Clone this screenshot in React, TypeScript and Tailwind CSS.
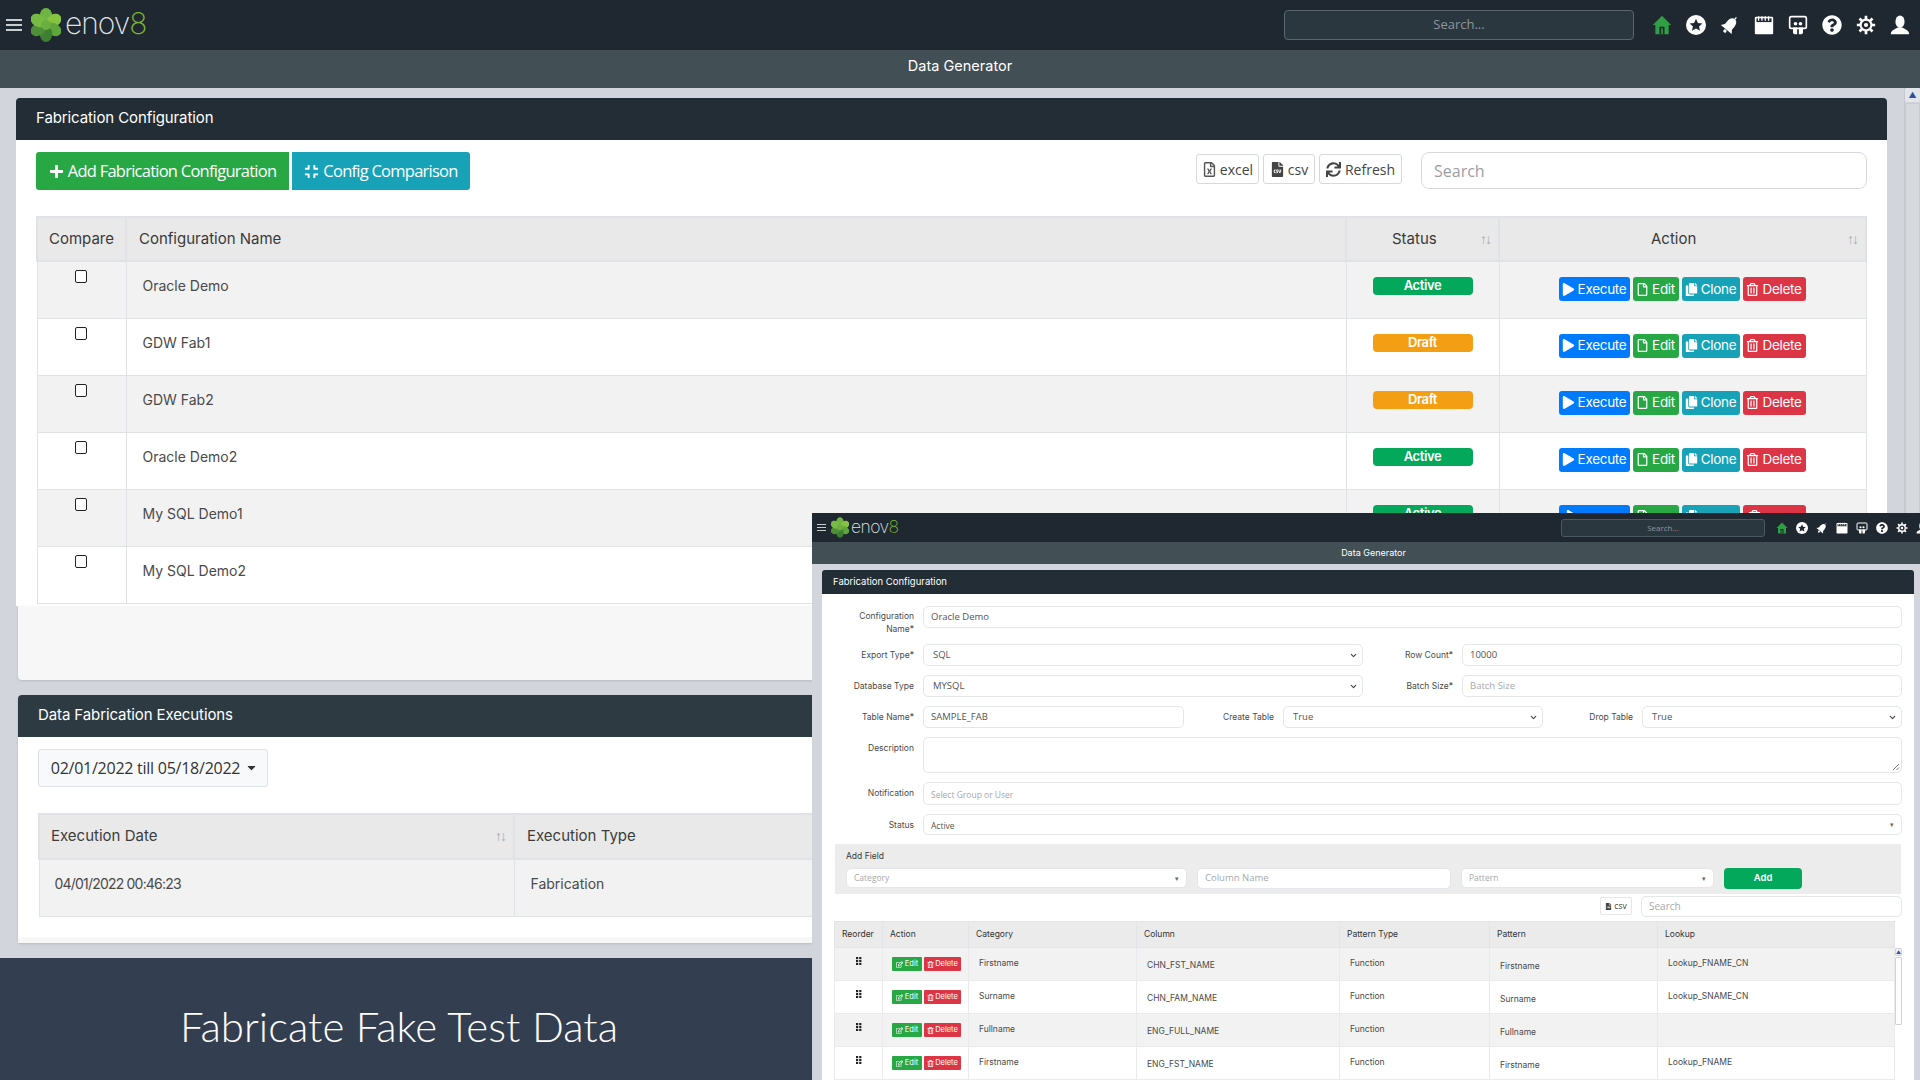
import React from "react";
import { FaPlus, FaCompress, FaRegFileExcel, FaFileCsv, FaSync, FaPlay, FaRegFile, FaCopy, FaRegTrashAlt, FaRegEdit, FaQuestionCircle, FaCaretDown } from "react-icons/fa";
import { ChevronDown } from "lucide-react";

function Clover({ w, h }: { w: number; h: number }) {
  const lobes = [
    { a: 0, c: "#6fb544" },
    { a: 60, c: "#86c440" },
    { a: 120, c: "#5fa63c" },
    { a: 180, c: "#3f7f31" },
    { a: 240, c: "#4f8f38" },
    { a: 300, c: "#78bb44" },
  ];
  return (
    <svg width={w} height={h} viewBox="0 0 30 34" className="shrink-0">
      {lobes.map((l) => (
        <ellipse key={l.a} cx="15" cy="8" rx="6.2" ry="8" fill={l.c} transform={`rotate(${l.a} 15 17)`} />
      ))}
      <circle cx="15" cy="17" r="5" fill="#6aaf3f" />
    </svg>
  );
}

function NavIcons({ s, gap }: { s: number; gap: string }) {
  const bg = "#1f2730";
  return (
    <div className={`flex items-center ${gap}`}>
      <svg width={s} height={s} viewBox="0 0 24 24" className="shrink-0">
        <path d="M12 1 L1 12 H4 V23 H20 V12 H23 Z" fill="#2f9e44" />
        <path d="M9 23 V14 H15 V23 H13 V16 H11 V23 Z" fill={bg} />
      </svg>
      <svg width={s} height={s} viewBox="0 0 24 24" className="shrink-0">
        <circle cx="12" cy="12" r="12" fill="#fff" />
        <path d="M12 4.5 L14.3 9.5 L19.6 10.1 L15.7 13.7 L16.8 19 L12 16.3 L7.2 19 L8.3 13.7 L4.4 10.1 L9.7 9.5 Z" fill={bg} />
      </svg>
      <svg width={s} height={s} viewBox="0 0 24 24" className="shrink-0">
        <g transform="rotate(40 12 12)">
          <path d="M12 3 C7.5 3 6.5 8 6.5 11 V15 L3.5 19 H20.5 L17.500 15 V11 C17.500 8 16.500 3 12 3 Z" fill="#fff" />
          <circle cx="12" cy="21.500" r="2" fill="#fff" />
          <path d="M12 3 V0" stroke="#fff" strokeWidth="1.500" />
        </g>
      </svg>
      <svg width={s} height={s} viewBox="0 0 24 24" className="shrink-0">
        <rect x="1" y="2" width="22" height="21" rx="1.500" fill="#fff" />
        <rect x="3" y="4" width="18" height="4.500" fill={bg} />
        <path d="M5.500 1.500 V7 M9.500 1.500 V7 M13.500 1.500 V7 M17.500 1.500 V7" stroke="#fff" strokeWidth="1.600" />
      </svg>
      <svg width={s} height={s} viewBox="0 0 24 24" className="shrink-0">
        <rect x="2" y="2" width="20" height="14" rx="2" fill={bg} stroke="#fff" strokeWidth="2" />
        <circle cx="9" cy="10.500" r="2.200" fill="#fff" />
        <circle cx="15" cy="10.500" r="2.200" fill="#fff" />
        <path d="M6 15 H11 V23 H8 C7 23 6 22 6 21 Z M13 15 H18 V21 C18 22 17 23 16 23 H13 Z" fill="#fff" />
      </svg>
      <FaQuestionCircle size={s} color="#fff" className="shrink-0" />
      <svg width={s} height={s} viewBox="0 0 24 24" className="shrink-0">
        <path d="M12 1 V23 M1 12 H23 M4.200 4.200 L19.800 19.800 M19.800 4.200 L4.200 19.800" stroke="#fff" strokeWidth="3.200" />
        <circle cx="12" cy="12" r="6.500" fill={bg} stroke="#fff" strokeWidth="2.600" />
        <circle cx="12" cy="12" r="2.500" fill="#fff" />
      </svg>
      <svg width={s} height={s} viewBox="0 0 24 24" className="shrink-0">
        <ellipse cx="12" cy="8" rx="5.500" ry="7.500" fill="#fff" />
        <path d="M1 23 C1 18 6 17.500 9 15 H15 C18 17.500 23 18 23 23 Z" fill="#fff" />
      </svg>
    </div>
  );
}

function Sort() {
  return <span className="text-[14px] leading-none tracking-[-2px] text-[#a8adb2] font-['Liberation_Sans',sans-serif]">↑↓</span>;
}

const rows = [
  { n: "Oracle Demo", s: "Active", mode: "full" },
  { n: "GDW Fab1", s: "Draft", mode: "full" },
  { n: "GDW Fab2", s: "Draft", mode: "full" },
  { n: "Oracle Demo2", s: "Active", mode: "full" },
  { n: "My SQL Demo1", s: "Active", mode: "clipped" },
  { n: "My SQL Demo2", s: "Draft", mode: "hidden" },
];

function RowActions({ clipped }: { clipped?: boolean }) {
  const btn = "h-[24px] flex items-center justify-center gap-[3px] rounded-[3px] text-white text-[13.500px] tracking-[-0.3px]";
  return (
    <div className="flex gap-[3px] pl-[59px] pt-[15px]">
      <span className={`${btn} w-[71px] bg-[#007bff]`}>{clipped ? <span className="w-[13px] mr-[44px] flex"><FaPlay size={13} /></span> : <><FaPlay size={13} />Execute</>}</span>
      <span className={`${btn} w-[46px] bg-[#28a745]`}>{clipped ? <span className="mr-[26px] flex"><FaRegFile size={13} /></span> : <><FaRegFile size={13} />Edit</>}</span>
      <span className={`${btn} w-[58px] bg-[#17a2b8]`}>{clipped ? <span className="mr-[38px] flex"><FaCopy size={13} /></span> : <><FaCopy size={13} />Clone</>}</span>
      <span className={`${btn} w-[63px] bg-[#dc3545]`}>{clipped ? <span className="mr-[40px] flex"><FaRegTrashAlt size={13} /></span> : <><FaRegTrashAlt size={13} />Delete</>}</span>
    </div>
  );
}

function Box({ text, muted, select, cls, mini, low }: { text: string; muted?: boolean; select?: boolean; cls: string; mini?: boolean; low?: boolean }) {
  return (
    <div className={`flex items-center justify-between border border-[#e3e6ea] rounded-[5px] bg-white px-[7px] text-[9.500px] font-['Open_Sans',sans-serif] ${muted ? "text-[#a6a9ad]" : "text-[#555]"} ${cls}`}>
      <span className={`${select ? "pl-[2px]" : ""} ${low ? "pt-[3px]" : ""}`}>{text}</span>
      {select && <ChevronDown size={9} strokeWidth={3} className="text-[#444] -mr-[3px]" />}
      {mini && <span className="text-[7px] text-[#666] leading-none">▾</span>}
    </div>
  );
}

const labelCls = "text-right text-[8.500px] leading-[12.500px] text-[#4a4a4a] pt-[5px]";

const miniRows = [
  ["Firstname", "CHN_FST_NAME", "Function", "Firstname", "Lookup_FNAME_CN"],
  ["Surname", "CHN_FAM_NAME", "Function", "Surname", "Lookup_SNAME_CN"],
  ["Fullname", "ENG_FULL_NAME", "Function", "Fullname", ""],
  ["Firstname", "ENG_FST_NAME", "Function", "Firstname", "Lookup_FNAME"],
];

export default function App() {
  return (
    <div className="relative w-[1920px] h-[1080px] overflow-hidden bg-[#d2d6dc] font-['Inter',sans-serif]">
      {/* Top bar */}
      <header className="h-[50px] bg-[#1f2730] flex items-center">
        <div className="w-[16px] ml-[6px] flex flex-col gap-[3px]">
          <span className="h-[2px] bg-[#c9cdd0]" />
          <span className="h-[2px] bg-[#c9cdd0]" />
          <span className="h-[2px] bg-[#c9cdd0]" />
        </div>
        <div className="ml-[9px]"><Clover w={30} h={34} /></div>
        <div className="ml-[4px] text-[30px] leading-none font-['Inter',sans-serif] font-[200] tracking-[-1px] text-[#dfe3e5] -mt-[5px]">
          enov<span className="text-[#7db52f]">8</span>
        </div>
        <div className="ml-auto w-[350px] h-[30px] rounded-[4px] border border-[#5a6670] bg-[#2b373f] flex items-center justify-center text-[13px] text-[#8c969d] font-['Open_Sans',sans-serif]">
          Search...
        </div>
        <div className="ml-[18px] pr-[10px]"><NavIcons s={20} gap="gap-[14px]" /></div>
      </header>
      <div className="h-[38px] bg-[#424f55] flex items-center justify-center pb-[6px] text-[14.500px] text-white">Data Generator</div>

      {/* Body */}
      <div className="flex h-[870px]">
        <div className="flex-1 min-w-0 pt-[10px] pl-[16px] pr-[17px]">
          <section>
            <div className="h-[42px] bg-[#222d35] rounded-t-[4px] flex items-center pb-[1px] px-[20px] text-[15px] text-white tracking-[-0.1px]">
              Fabrication Configuration
            </div>
            <div className="bg-white px-[20px] pt-[12px] pb-[2px]">
              <div className="flex items-start">
                <button className="w-[253px] h-[38px] rounded-l-[3px] bg-[#28a745] text-white text-[16.500px] flex items-center justify-center gap-[4px] font-['Open_Sans',sans-serif] tracking-[-0.75px]">
                  <FaPlus size={15} />Add Fabrication Configuration
                </button>
                <button className="ml-[3px] w-[178px] h-[38px] rounded-r-[3px] bg-[#17a2b8] text-white text-[16.500px] flex items-center justify-center gap-[4px] font-['Open_Sans',sans-serif] tracking-[-0.75px]">
                  <FaCompress size={15} />Config Comparison
                </button>
                <div className="flex-1" />
                <button className="mt-[2px] w-[63px] h-[30px] border border-[#d5d9de] rounded-[3px] text-[14px] text-[#444] flex items-center justify-center gap-[3px] font-['Open_Sans',sans-serif]">
                  <FaRegFileExcel size={15} className="text-[#555]" />excel
                </button>
                <button className="mt-[2px] ml-[4px] w-[52px] h-[30px] border border-[#d5d9de] rounded-[3px] text-[14px] text-[#444] flex items-center justify-center gap-[3px] font-['Open_Sans',sans-serif]">
                  <FaFileCsv size={15} className="text-[#444]" />csv
                </button>
                <button className="mt-[2px] ml-[4px] w-[83px] h-[30px] border border-[#d5d9de] rounded-[3px] text-[14px] text-[#444] flex items-center justify-center gap-[4px] font-['Open_Sans',sans-serif]">
                  <FaSync size={15} className="text-[#444]" />Refresh
                </button>
                <input readOnly placeholder="Search" className="ml-[19px] w-[446px] h-[37px] border border-[#d5d9de] rounded-[8px] px-[12px] text-[16px] placeholder:text-[#9a9ea3] font-['Open_Sans',sans-serif]" />
              </div>
              <table className="mt-[26px] w-[1829px] table-fixed border-collapse text-[#3d3d3d]">
                <colgroup>
                  <col className="w-[89px]" />
                  <col className="w-[1220px]" />
                  <col className="w-[153px]" />
                  <col className="w-[367px]" />
                </colgroup>
                <thead>
                  <tr className="h-[44px] bg-[#e9e9e9] text-[15px] text-[#3a3a3a] font-normal">
                    <th className="border-2 border-[#e0e3e6] font-normal text-center">Compare</th>
                    <th className="border-2 border-[#e0e3e6] font-normal text-left pl-[12px]">Configuration Name</th>
                    <th className="border-2 border-[#e0e3e6] font-normal text-left pl-[45px]">
                      <div className="flex items-center justify-between pr-[8px]">Status<Sort /></div>
                    </th>
                    <th className="border-2 border-[#e0e3e6] font-normal text-left pl-[151px]">
                      <div className="flex items-center justify-between pr-[8px]">Action<Sort /></div>
                    </th>
                  </tr>
                </thead>
                <tbody>
                  {rows.map((r, i) => (
                    <tr key={r.n} className={`h-[57px] ${i % 2 === 0 ? "bg-[#f2f2f2]" : "bg-white"}`}>
                      <td className="border border-[#dfe3e6] align-top text-center pt-[3px] pr-[2px]">
                        <span className="inline-block w-[12px] h-[13px] border border-[#222] rounded-[2px] bg-white" />
                      </td>
                      <td className="border border-[#dfe3e6] align-top pl-[16px] pt-[15px] text-[14px] leading-[18px] text-[#4a4a4a]">{r.n}</td>
                      <td className="border border-[#dfe3e6] align-top pl-[26px] pt-[15px]">
                        {r.mode !== "hidden" && (
                          <span className={`flex items-center justify-center w-[100px] h-[18px] rounded-[4px] text-white text-[13px] font-semibold tracking-[-0.4px] ${r.s === "Active" ? "bg-[#04a85b]" : "bg-[#f49e14]"}`}>{r.s}</span>
                        )}
                      </td>
                      <td className="border border-[#dfe3e6] align-top">
                        {r.mode === "full" && <RowActions />}
                        {r.mode === "clipped" && <RowActions clipped />}
                      </td>
                    </tr>
                  ))}
                </tbody>
              </table>
            </div>
            <div className="h-[74px] ml-[2px] bg-[#f7f7f7] rounded-b-[4px] shadow-sm" />
          </section>

          <section className="mt-[15px] ml-[2px] bg-white rounded-t-[4px] shadow-sm">
            <div className="h-[42px] bg-[#2d3a42] rounded-t-[4px] flex items-center px-[20px] text-[15px] text-white tracking-[-0.1px]">
              Data Fabrication Executions
            </div>
            <div className="px-[20px] pt-[12px] pb-[20px]">
              <button className="w-[230px] h-[38px] rounded-[3px] border border-[#dde1e5] bg-[#f8f9fa] pl-[3px] text-[16px] text-[#333] flex items-center justify-center gap-[5px] font-['Open_Sans',sans-serif] tracking-[-0.25px]">
                02/01/2022 till 05/18/2022 <FaCaretDown size={13} />
              </button>
              <table className="mt-[26px] w-[1820px] table-fixed border-collapse text-[#3d3d3d]">
                <colgroup>
                  <col className="w-[475px]" />
                  <col />
                </colgroup>
                <thead>
                  <tr className="h-[45px] bg-[#e9e9e9] text-[15px]">
                    <th className="border-2 border-[#e0e3e6] font-normal text-left pl-[11px]">
                      <div className="flex items-center justify-between pr-[8px]">Execution Date<Sort /></div>
                    </th>
                    <th className="border-2 border-[#e0e3e6] font-normal text-left pl-[12px]">Execution Type</th>
                  </tr>
                </thead>
                <tbody>
                  <tr className="h-[58px] bg-[#f2f2f2] text-[14px] text-[#4a4a4a]">
                    <td className="border border-[#dfe3e6] align-top pl-[15px] pt-[13px] tracking-[-0.8px]">04/01/2022 00:46:23</td>
                    <td className="border border-[#dfe3e6] align-top pl-[16px] pt-[13px]">Fabrication</td>
                  </tr>
                </tbody>
              </table>
            </div>
            <div className="h-[6px] bg-[#f7f7f7]" />
          </section>
        </div>
        {/* Page scrollbar */}
        <div className="w-[16px] flex flex-col gap-[1px] border-l border-[#c4c8ce]">
          <div className="h-[14px] flex items-center justify-center rounded-[2px] bg-[#e2e5e9] text-[8px] leading-none text-[#2d4f9e]">▲</div>
          <div className="flex-1 rounded-[2px] bg-[#d6d9de] border border-[#c8ccd2]" />
        </div>
      </div>

      {/* Banner */}
      <div className="absolute left-0 top-[958px] w-[812px] h-[122px] bg-[#333f50] flex items-center justify-center text-white text-[42px] font-['Lato',sans-serif] font-light pt-[14px] pr-[14px]">
        Fabricate Fake Test Data
      </div>

      {/* Overlaid second window */}
      <div className="absolute left-[812px] top-[513px] w-[1108px] h-[567px] overflow-hidden bg-[#d2d6dc]">
        <div className="h-[29px] bg-[#1f2730] flex items-center">
          <div className="w-[9px] ml-[5px] flex flex-col gap-[2px]">
            <span className="h-[1px] bg-[#c9cdd0]" />
            <span className="h-[1px] bg-[#c9cdd0]" />
            <span className="h-[1px] bg-[#c9cdd0]" />
          </div>
          <div className="ml-[5px]"><Clover w={18} h={21} /></div>
          <div className="ml-[2px] -mt-[2px] text-[17.500px] leading-none font-[200] tracking-[-0.6px] text-[#dfe3e5]">
            enov<span className="text-[#7db52f]">8</span>
          </div>
          <div className="ml-auto w-[204px] h-[18px] rounded-[3px] border border-[#4d5962] bg-[#2b373f] flex items-center justify-center text-[8px] text-[#8c969d] font-['Open_Sans',sans-serif]">
            Search...
          </div>
          <div className="ml-[11px] w-[144px] overflow-hidden"><NavIcons s={12} gap="gap-[8px]" /></div>
        </div>
        <div className="h-[22px] bg-[#424f55] flex items-center justify-center pl-[15px] pb-[1px] text-[9px] text-white">Data Generator</div>

        <section className="mt-[6px] ml-[10px] mr-[6px] h-[600px] bg-white rounded-t-[3px]">
          <div className="h-[24px] bg-[#222d35] rounded-t-[3px] flex items-center pl-[11px] text-[9.500px] text-white">
            Fabrication Configuration
          </div>
          <div className="pt-[12px] pr-[12px] flex flex-col gap-[9px]">
            <div className="flex h-[29px] gap-[9px]">
              <div className={`w-[92px] shrink-0 -mt-[1px] ${labelCls}`}>Configuration<br />Name*</div>
              <Box text="Oracle Demo" cls="flex-1 h-[22px]" />
            </div>
            <div className="flex h-[22px] gap-[9px]">
              <div className={`w-[92px] shrink-0 ${labelCls}`}>Export Type*</div>
              <Box text="SQL" select cls="w-[440px] h-[22px]" />
              <div className={`w-[81px] shrink-0 ${labelCls}`}>Row Count*</div>
              <Box text="10000" cls="flex-1 h-[22px]" />
            </div>
            <div className="flex h-[22px] gap-[9px]">
              <div className={`w-[92px] shrink-0 ${labelCls}`}>Database Type</div>
              <Box text="MYSQL" select cls="w-[440px] h-[22px]" />
              <div className={`w-[81px] shrink-0 ${labelCls}`}>Batch Size*</div>
              <Box text="Batch Size" muted cls="flex-1 h-[22px]" />
            </div>
            <div className="flex h-[22px] gap-[9px]">
              <div className={`w-[92px] shrink-0 ${labelCls}`}>Table Name*</div>
              <Box text="SAMPLE_FAB" cls="w-[261px] h-[22px]" />
              <div className={`w-[81px] shrink-0 ${labelCls}`}>Create Table</div>
              <Box text="True" select cls="w-[260px] h-[22px]" />
              <div className={`w-[81px] shrink-0 ${labelCls}`}>Drop Table</div>
              <Box text="True" select cls="flex-1 h-[22px]" />
            </div>
            <div className="flex h-[36px] gap-[9px]">
              <div className={`w-[92px] shrink-0 ${labelCls}`}>Description</div>
              <div className="relative flex-1 border border-[#e3e6ea] rounded-[5px] bg-white">
                <svg width="8" height="8" viewBox="0 0 8 8" className="absolute right-[1px] bottom-[1px]">
                  <path d="M1 7 L7 1 M4.500 7 L7 4.500" stroke="#555" strokeWidth="0.8" />
                </svg>
              </div>
            </div>
            <div className="flex h-[23px] gap-[9px]">
              <div className={`w-[92px] shrink-0 ${labelCls}`}>Notification</div>
              <Box text="Select Group or User" muted low cls="flex-1 h-[23px] !text-[8.500px]" />
            </div>
            <div className="flex h-[21px] gap-[9px]">
              <div className={`w-[92px] shrink-0 ${labelCls}`}>Status</div>
              <Box text="Active" mini low cls="flex-1 h-[21px] !text-[8.500px]" />
            </div>
            <div className="ml-[13px] mr-[1px] h-[50px] bg-[#ececec] pl-[11px] pt-[6px]">
              <div className="text-[8.500px] leading-[12px] text-[#3a3a3a]">Add Field</div>
              <div className="flex gap-[10px] mt-[6px]">
                <Box text="Category" muted mini cls="w-[341px] h-[20px] !text-[8.500px]" />
                <Box text="Column Name" muted cls="w-[254px] h-[21px]" />
                <Box text="Pattern" muted mini cls="w-[253px] h-[20px] !text-[8.500px]" />
                <div className="w-[78px] h-[21px] rounded-[4px] bg-[#04a85b] flex items-center justify-center text-white text-[9.500px] font-semibold">Add</div>
              </div>
            </div>
          </div>
          <div className="flex justify-end items-start mt-[2px] pr-[12px]">
            <div className="mt-[1px] w-[32px] h-[18px] border border-[#e3e6ea] rounded-[2px] flex items-center justify-center gap-[2px] text-[8.500px] text-[#444] font-['Open_Sans',sans-serif]">
              <FaFileCsv size={7} />csv
            </div>
            <Box text="Search" muted cls="ml-[9px] w-[261px] h-[21px] !text-[10px]" />
          </div>
          <div className="relative">
            <table className="mt-[4px] ml-[12px] w-[1060px] table-fixed border-collapse text-[8.500px] text-[#4a4a4a]">
              <colgroup>
                <col className="w-[48px]" />
                <col className="w-[86px]" />
                <col className="w-[168px]" />
                <col className="w-[203px]" />
                <col className="w-[150px]" />
                <col className="w-[168px]" />
                <col className="w-[237px]" />
              </colgroup>
              <thead>
                <tr className="h-[26px] bg-[#ebebeb] text-[#333]">
                  {["Reorder", "Action", "Category", "Column", "Pattern Type", "Pattern", "Lookup"].map((h) => (
                    <th key={h} className="border border-[#e2e4e7] font-normal text-left pl-[7px]">{h}</th>
                  ))}
                </tr>
              </thead>
              <tbody>
                {miniRows.map((r, i) => (
                  <tr key={i} className={`h-[33px] ${i % 2 === 0 ? "bg-[#f2f2f2]" : "bg-white"}`}>
                    <td className="border border-[#e8eaec] align-top pt-[9px] pl-[21px]">
                      <svg width="6" height="8" viewBox="0 0 6 8">
                        {[0, 1].map((c) => [0, 1, 2].map((d) => (
                          <rect key={`${c}${d}`} x={c * 3.2} y={d * 3} width="2.200" height="2.200" fill="#222" />
                        )))}
                      </svg>
                    </td>
                    <td className="border border-[#e8eaec] align-top pt-[9px] pl-[9px]">
                      <div className="flex gap-[2px]">
                        <span className="w-[30px] h-[14px] bg-[#28a745] rounded-[1px] flex items-center justify-center gap-[2px] text-white text-[7.500px]"><FaRegEdit size={7} />Edit</span>
                        <span className="w-[37px] h-[14px] bg-[#dc3545] rounded-[1px] flex items-center justify-center gap-[1px] text-white text-[7.500px]"><FaRegTrashAlt size={7} />Delete</span>
                      </div>
                    </td>
                    <td className="border border-[#e8eaec] align-top pt-[9px] pl-[10px]">{r[0]}</td>
                    <td className="border border-[#e8eaec] align-top pt-[11px] pl-[10px]">{r[1]}</td>
                    <td className="border border-[#e8eaec] align-top pt-[9px] pl-[10px]">{r[2]}</td>
                    <td className="border border-[#e8eaec] align-top pt-[12px] pl-[10px]">{r[3]}</td>
                    <td className="border border-[#e8eaec] align-top pt-[9px] pl-[10px]">{r[4]}</td>
                  </tr>
                ))}
              </tbody>
            </table>
            <div className="absolute right-[12px] top-[27px] w-[7px] flex flex-col gap-[1px]">
              <div className="h-[8px] rounded-[1px] bg-[#eef0f3] border border-[#cfd3d8] text-[5px] leading-[6px] text-center text-[#2d4f9e]">▲</div>
              <div className="h-[68px] rounded-[1px] bg-white border border-[#cfd3d8]" />
            </div>
          </div>
        </section>
      </div>
    </div>
  );
}
